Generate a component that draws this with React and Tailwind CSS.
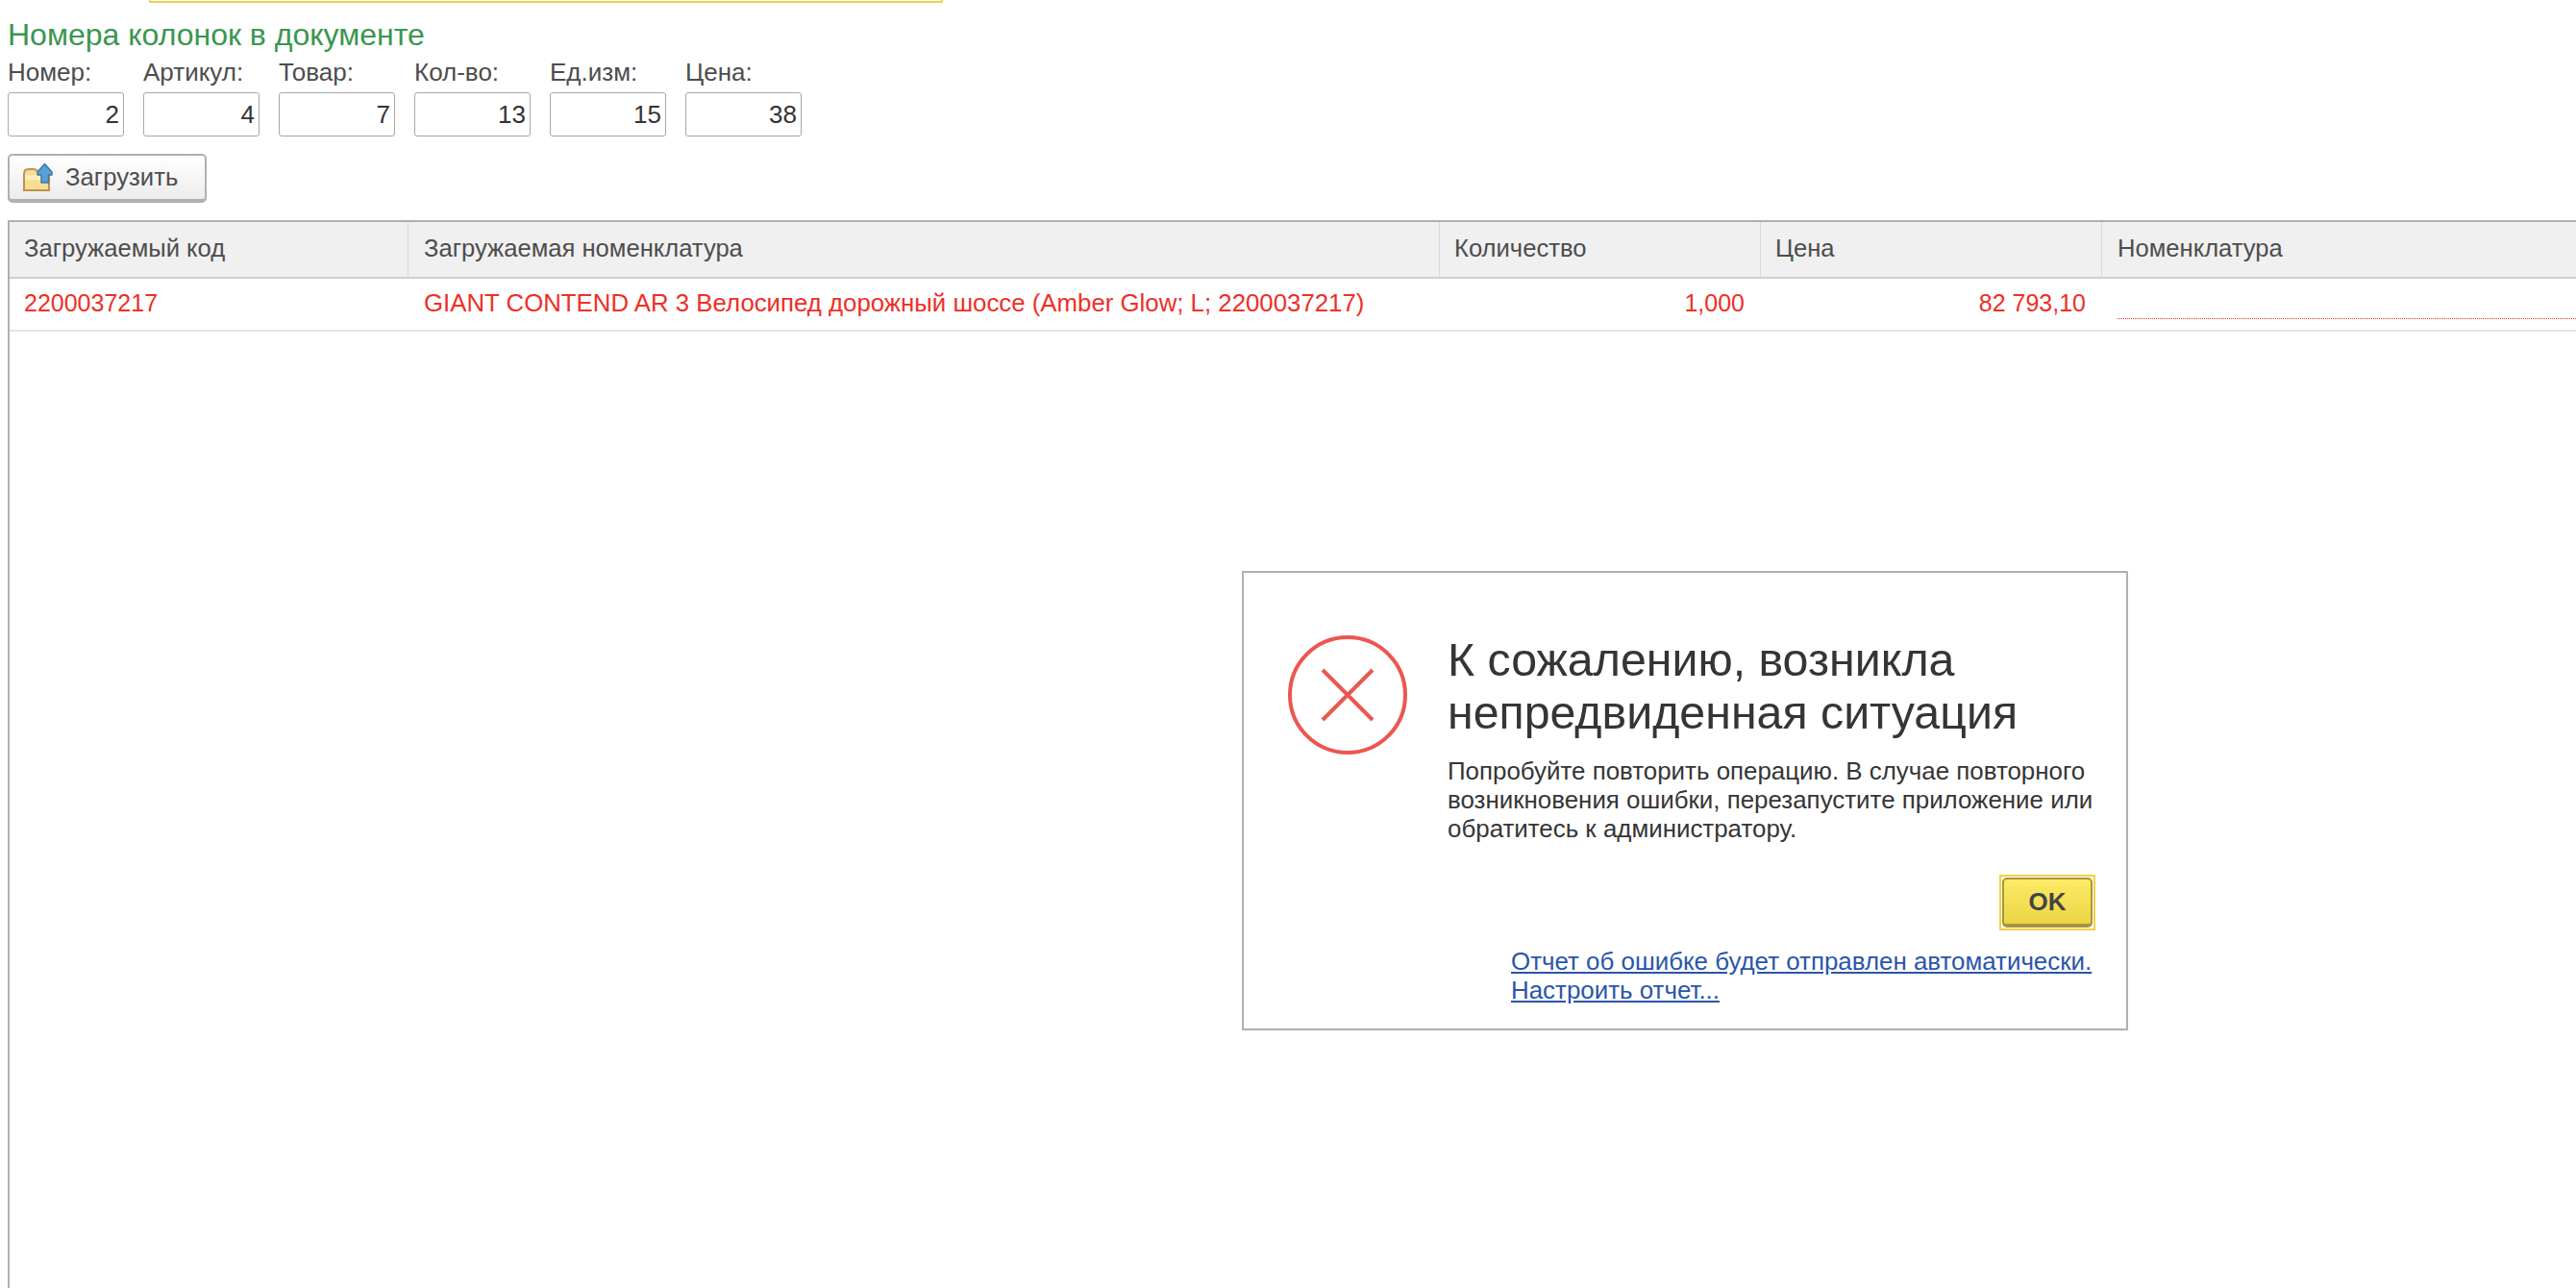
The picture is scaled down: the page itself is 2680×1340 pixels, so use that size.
import React from "react";

const fields = [
  { label: "Номер:", value: "2" },
  { label: "Артикул:", value: "4" },
  { label: "Товар:", value: "7" },
  { label: "Кол-во:", value: "13" },
  { label: "Ед.изм:", value: "15" },
  { label: "Цена:", value: "38" },
];

const FolderIcon = () => (
  <svg width="34" height="34" viewBox="0 0 34 34" className="block shrink-0">
    <path d="M3 30 V13 C3 10 5 8 8 8 H13 C16 8 17 10 19 13 H29 V30 Z" fill="#f6df94" stroke="#c2914f" strokeWidth="2" />
    <path d="M4 14 H28 V19 H4 Z" fill="#fbeeb8" />
    <path d="M24.5 2.5 L32 11 V14 H28.5 V22 H21 V14 H17 V11 Z" fill="#5a9fd8" stroke="#3b79ac" strokeWidth="1.5" strokeLinejoin="round" />
  </svg>
);

const ErrorIcon = () => (
  <svg width="124" height="124" viewBox="0 0 124 124" className="block">
    <circle cx="62" cy="62" r="60" fill="none" stroke="#ec5650" strokeWidth="4" />
    <path d="M36 36 L88 88 M88 36 L36 88" stroke="#ec5650" strokeWidth="4" />
  </svg>
);

const Th = ({ className, children }) => (
  <div className={`h-[57px] pb-[2px] flex items-center border-r border-[#d8d8d8] shrink-0 ${className}`}>{children}</div>
);

export default function App() {
  return (
    <div className="relative w-[2680px] h-[1340px] overflow-hidden bg-white font-['Liberation_Sans',Arial,sans-serif]">
      <div className="ml-[155px] w-[826px] h-[3px] border-x-2 border-b-2 border-[#f5cf4f]" />
      <div className="pl-2 pt-[14px]">
        <div className="text-[32px] leading-[38px] text-[#3a9650]">Номера колонок в документе</div>
        <div className="flex gap-5 mt-1">
          {fields.map((f) => (
            <div key={f.label} className="w-[121px]">
              <div className="text-[26px] leading-[33px] text-[#4d4d4d] h-[37px]">{f.label}</div>
              <div className="h-[46px] border border-[#a8a8a8] rounded-[3px] flex items-center justify-end pr-[4px] text-[26px] text-[#333333]">
                {f.value}
              </div>
            </div>
          ))}
        </div>
        <button className="mt-[18px] w-[207px] h-[51px] flex items-center pl-[12px] gap-[12px] rounded-[5px] border-2 border-[#b0b0b0] border-b-[4px] bg-gradient-to-b from-white to-[#ececec] text-[25.7px] text-[#4d4d4d]">
          <FolderIcon />
          Загрузить
        </button>
        <div className="mt-[18px] h-[1111px] border-l-2 border-[#b0b0b0]">
          <div className="border-t-2 border-[#b0b0b0] bg-[#f0f0f0] border-b-2 border-b-[#cfcfcf] flex text-[25.6px] text-[#4d4d4d] w-[2672px]">
            <Th className="w-[415px] pl-[15px]">Загружаемый код</Th>
            <Th className="w-[1073px] pl-4">Загружаемая номенклатура</Th>
            <Th className="w-[334px] pl-[15px]">Количество</Th>
            <Th className="w-[355px] pl-[15px]">Цена</Th>
            <div className="h-[57px] pb-[2px] flex items-center pl-4 flex-1">Номенклатура</div>
          </div>
          <div className="h-[55px] pb-[2px] border-b-2 border-[#e4e4e4] flex items-center text-[25px] text-[#ee2f26]">
            <div className="w-[415px] pl-[15px] shrink-0">2200037217</div>
            <div className="w-[1073px] pl-4 shrink-0 text-[25.8px]">GIANT CONTEND AR 3 Велосипед дорожный шоссе (Amber Glow; L; 2200037217)</div>
            <div className="w-[334px] pr-[17px] text-right shrink-0">1,000</div>
            <div className="w-[355px] pr-[17px] text-right shrink-0">82 793,10</div>
            <div className="flex-1 pl-4 pt-[10px]">
              <div className="border-b border-dotted border-[#ee2f26] h-[22px]" />
            </div>
          </div>
        </div>
      </div>

      <div className="absolute left-[1292px] top-[594px] w-[922px] h-[478px] border-2 border-[#b0b0b0] bg-white pl-[46px] pt-[63px] flex text-[#353535]">
        <div className="w-[166px] shrink-0 pt-[2px]">
          <ErrorIcon />
        </div>
        <div className="w-[680px]">
          <div className="text-[48.3px] leading-[55px]">
            К сожалению, возникла
            <br />
            непредвиденная ситуация
          </div>
          <div className="text-[25.9px] leading-[30px] mt-[18px]">
            Попробуйте повторить операцию. В случае повторного
            <br />
            возникновения ошибки, перезапустите приложение или
            <br />
            обратитесь к администратору.
          </div>
          <div className="flex justify-end mt-[33px] pr-[6px]">
            <div className="w-[100px] h-[58px] border-2 border-[#f3cf45] p-px">
              <button className="w-full h-[52px] rounded-[5px] border-2 border-[#a8953a] border-b-[4px] bg-gradient-to-b from-[#fdeb66] to-[#ecd444] font-bold text-[26px] text-[#444444]">
                OK
              </button>
            </div>
          </div>
          <div className="ml-[66px] mt-[17px] text-[25.9px] leading-[30px] text-[#2a55ab] underline">
            <div>Отчет об ошибке будет отправлен автоматически.</div>
            <div>Настроить отчет...</div>
          </div>
        </div>
      </div>
    </div>
  );
}
